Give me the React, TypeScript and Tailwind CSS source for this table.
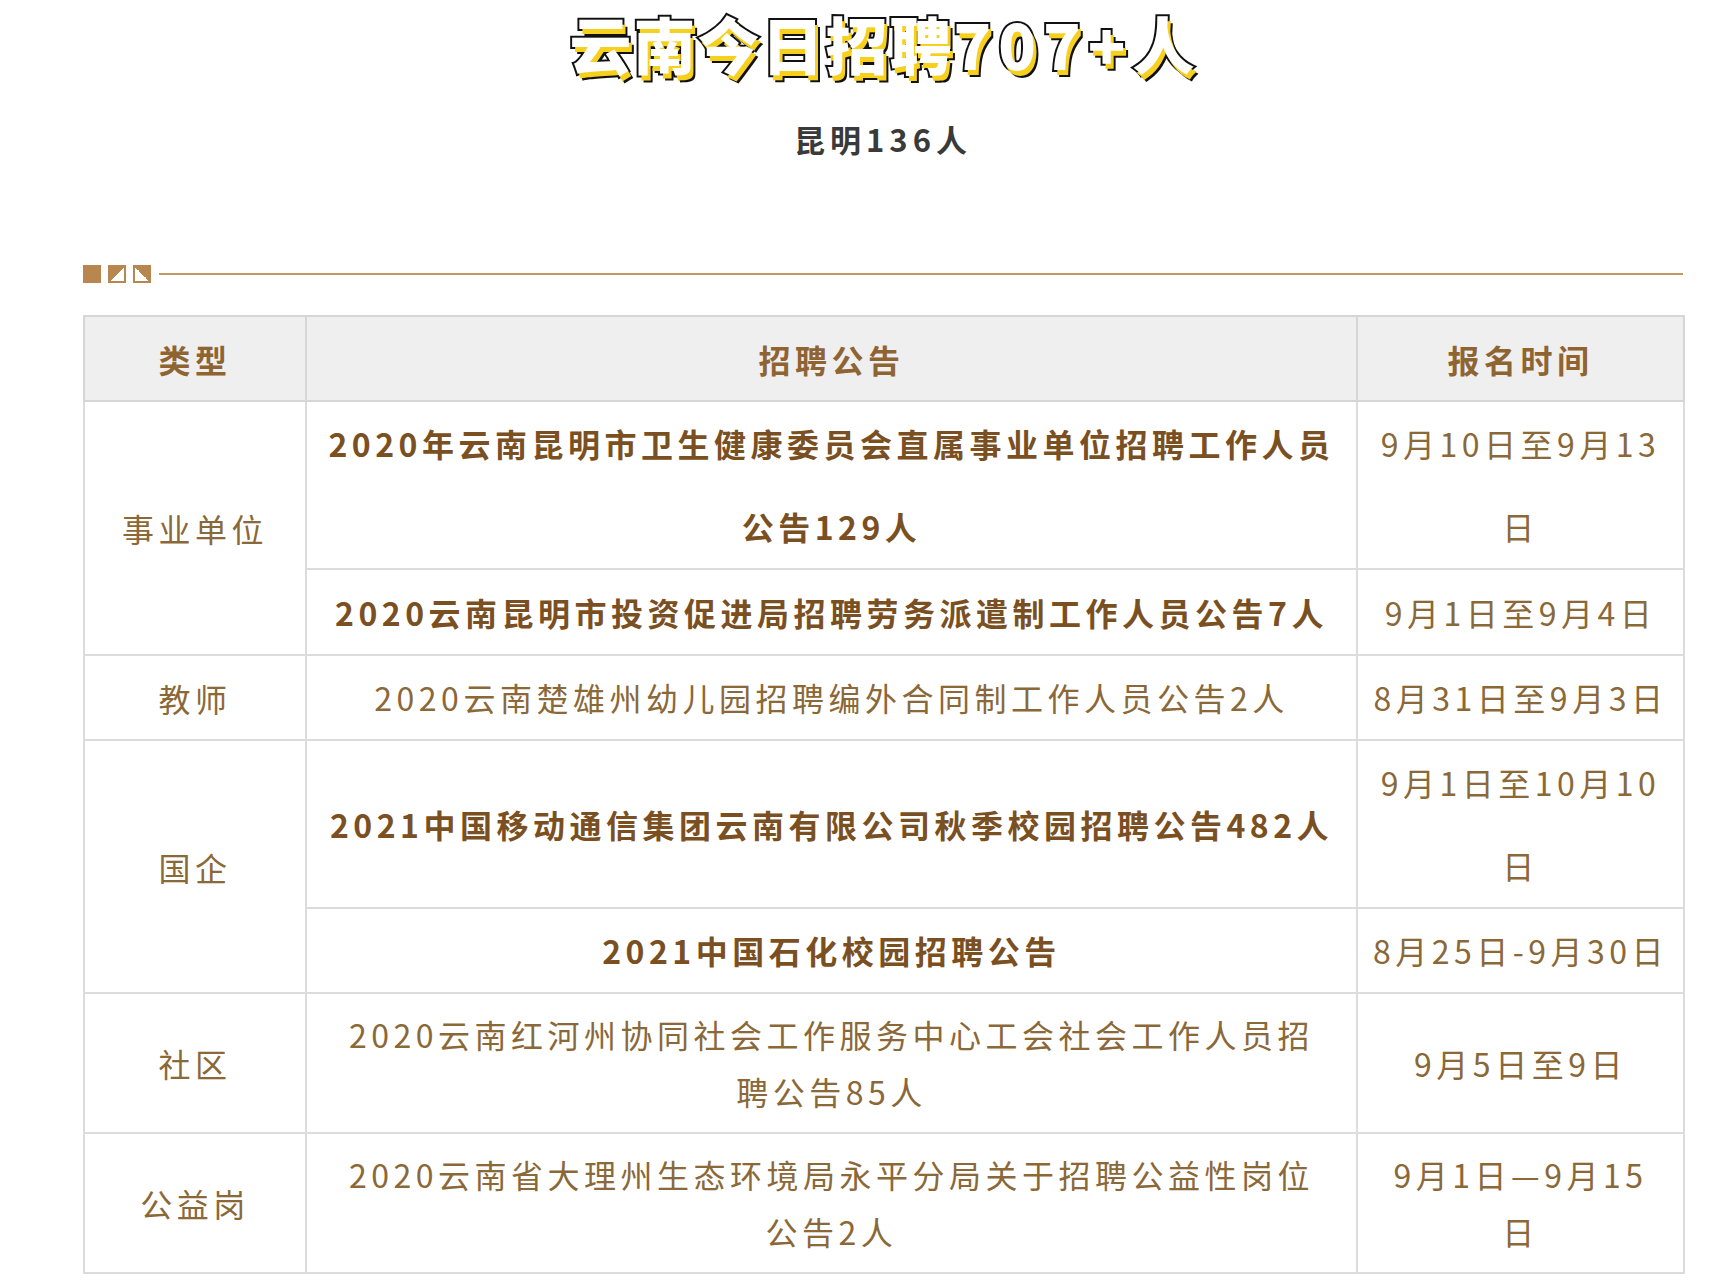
import React from "react";

type Cell = { lines: string[]; bold?: boolean; tight?: boolean };

type Row = {
  type?: string;
  span?: number;
  h: number;
  notice: Cell;
  date: Cell;
};

const rows: Row[] = [
  {
    type: "事业单位",
    span: 2,
    h: 168,
    notice: { lines: ["2020年云南昆明市卫生健康委员会直属事业单位招聘工作人员", "公告129人"], bold: true },
    date: { lines: ["9月10日至9月13", "日"] },
  },
  {
    h: 86,
    notice: { lines: ["2020云南昆明市投资促进局招聘劳务派遣制工作人员公告7人"], bold: true },
    date: { lines: ["9月1日至9月4日"] },
  },
  {
    type: "教师",
    h: 85,
    notice: { lines: ["2020云南楚雄州幼儿园招聘编外合同制工作人员公告2人"] },
    date: { lines: ["8月31日至9月3日"] },
  },
  {
    type: "国企",
    span: 2,
    h: 168,
    notice: { lines: ["2021中国移动通信集团云南有限公司秋季校园招聘公告482人"], bold: true },
    date: { lines: ["9月1日至10月10", "日"] },
  },
  {
    h: 84,
    notice: { lines: ["2021中国石化校园招聘公告"], bold: true },
    date: { lines: ["8月25日-9月30日"] },
  },
  {
    type: "社区",
    h: 140,
    notice: { lines: ["2020云南红河州协同社会工作服务中心工会社会工作人员招", "聘公告85人"], tight: true },
    date: { lines: ["9月5日至9日"] },
  },
  {
    type: "公益岗",
    h: 140,
    notice: { lines: ["2020云南省大理州生态环境局永平分局关于招聘公益性岗位", "公告2人"], tight: true },
    date: { lines: ["9月1日—9月15", "日"], tight: true },
  },
];

function Lines({ cell }: { cell: Cell }) {
  return (
    <div
      className={
        "whitespace-nowrap " +
        (cell.tight ? "leading-[57px] " : "leading-[83px] ") +
        (cell.bold ? "font-bold text-[#7a5023]" : "text-[#8a6838]")
      }
    >
      {cell.lines.map((l, i) => (
        <div key={i}>{l}</div>
      ))}
    </div>
  );
}

export default function App() {
  return (
    <div className="min-h-[1280px] bg-white font-['Noto_Sans_CJK_SC','Noto_Sans',sans-serif]">
      <div className="ml-[83px] w-[1600px]">
        <div className="text-center">
          <div className="text-[62px] leading-[86px] font-black tracking-[2px] text-white [-webkit-text-stroke:4px_#111] [paint-order:stroke_fill] [text-shadow:3px_5px_0_#f7cf1d,5px_7px_0_#111]">
            云南今日招聘<span className="tracking-[7px]">707+</span>人
          </div>
          <div className="mt-[33px] text-[31px] leading-[40px] font-semibold tracking-[5px] text-[#3a3a3a]">
            昆明136人
          </div>
        </div>

        <div className="mt-[106px] flex items-center">
          <div className="h-[18px] w-[18px] bg-[#b8864f]" />
          <div className="ml-[7px] h-[18px] w-[18px] border-2 border-[#b8864f] bg-[linear-gradient(to_bottom_right,#b8864f_50%,#ffffff_50%)]" />
          <div className="ml-[7px] h-[18px] w-[18px] border-2 border-[#b8864f] bg-[linear-gradient(to_bottom_left,#b8864f_50%,#ffffff_50%)]" />
          <div className="ml-[8px] h-[2px] flex-1 bg-[#c39a67]" />
        </div>

        <table className="mt-[32px] w-[1600px] table-fixed border-collapse border-2 border-[#cdcdcd] text-[32px] tracking-[4.5px]">
          <colgroup>
            <col className="w-[222px]" />
            <col className="w-[1051px]" />
            <col className="w-[327px]" />
          </colgroup>
          <thead>
            <tr className="h-[85px] bg-[#efefef] text-[#8f6433] font-bold">
              <th className="border-2 border-[#d6d6d6] p-0 text-center">类型</th>
              <th className="border-2 border-[#d6d6d6] p-0 text-center">招聘公告</th>
              <th className="border-2 border-[#d6d6d6] p-0 text-center">报名时间</th>
            </tr>
          </thead>
          <tbody>
            {rows.map((r, i) => (
              <tr key={i} style={{ height: r.h }}>
                {r.type && (
                  <td rowSpan={r.span ?? 1} className="border-2 border-[#dcdcdc] p-0 text-center align-middle text-[#8a6838]">
                    {r.type}
                  </td>
                )}
                <td className="overflow-hidden border-2 border-[#dcdcdc] p-0 text-center align-middle">
                  <Lines cell={r.notice} />
                </td>
                <td className="overflow-hidden border-2 border-[#dcdcdc] p-0 text-center align-middle">
                  <Lines cell={r.date} />
                </td>
              </tr>
            ))}
          </tbody>
        </table>
      </div>
    </div>
  );
}
